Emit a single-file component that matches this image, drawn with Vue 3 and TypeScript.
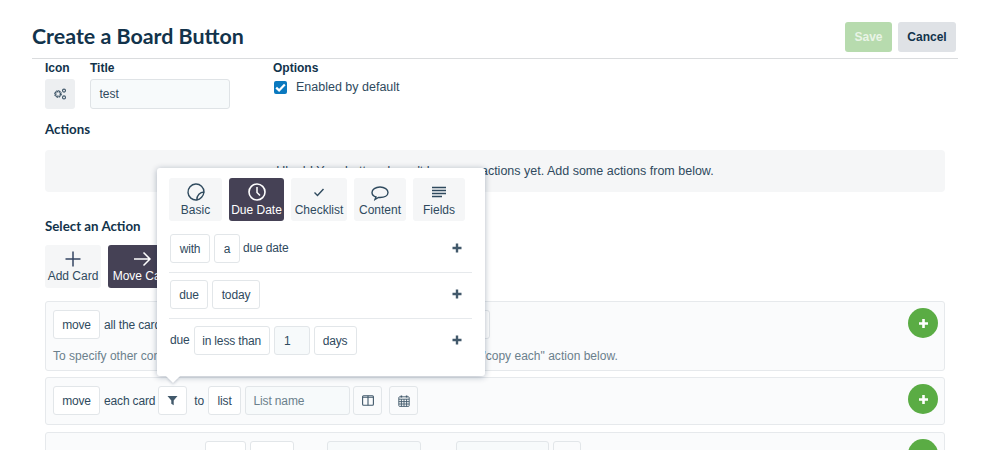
<template>
  <div class="page">
    <header class="page-head">
      <h1>Create a Board Button</h1>
      <div class="head-btns">
        <button class="btn btn--save">Save</button>
        <button class="btn btn--cancel">Cancel</button>
      </div>
    </header>

    <div class="content">
      <div class="settings">
        <div class="field field--icon">
          <label>Icon</label>
          <button class="icon-pick">
            <svg width="14" height="14" viewBox="0 0 14 14" fill="none" stroke="#42596b">
              <circle cx="5" cy="7" r="2.6" stroke-width="1.8" stroke-dasharray="1.5 0.6" />
              <circle cx="5" cy="7" r="3.4" stroke-width="1" stroke-dasharray="1.4 1.2" />
              <circle cx="11" cy="3.6" r="1.5" stroke-width="1.1" />
              <circle cx="11" cy="10.4" r="1.5" stroke-width="1.1" />
            </svg>
          </button>
        </div>
        <div class="field field--title">
          <label>Title</label>
          <div class="title-input">test</div>
        </div>
        <div class="field">
          <label>Options</label>
          <div class="option">
            <span class="checkbox">
              <svg width="11" height="9" viewBox="0 0 11 9" fill="none" stroke="#fff" stroke-width="2.2">
                <path d="M1.2 4.6 4.1 7.4 9.8 1.4" />
              </svg>
            </span>
            Enabled by default
          </div>
        </div>
      </div>

      <h2 class="actions-title">Actions</h2>
      <div class="empty-box">Uh oh! Your button doesn't have any actions yet. Add some actions from below.</div>

      <h2 class="select-title">Select an Action</h2>
      <div class="type-tabs">
        <div class="tab tab--add">
          <svg width="22" height="18" viewBox="0 0 22 18" fill="none" stroke="#344563" stroke-width="1.5">
            <path d="M11 1.5v15M3.5 9h15" />
          </svg>
          <span>Add Card</span>
        </div>
        <div class="tab tab--move tab--active">
          <svg width="22" height="18" viewBox="0 0 22 18" fill="none" stroke="#fff" stroke-width="1.5">
            <path d="M3 9h16M12.5 2.5 19 9l-6.500 6.500" />
          </svg>
          <span>Move Card</span>
        </div>
      </div>

      <div class="rule rule--tall">
        <div class="rule-main">
          <div class="rule-line">
            <span class="chip chip--move">move</span>
            <span>all the cards in the list</span>
            <span class="chip chip--hidden"></span>
          </div>
          <p class="hint">To specify other conditions for cards in this action, you can use the "move each"/"copy each" action below.</p>
        </div>
        <button class="add-btn">
          <svg width="11" height="11" viewBox="0 0 11 11" stroke="#fff" stroke-width="2.600"><path d="M5.500 1v9M1 5.500h9" /></svg>
        </button>
      </div>

      <div class="rule">
        <div class="rule-line">
          <span class="chip chip--move">move</span>
          <span>each card</span>
          <span class="chip chip--icon chip--filter">
            <svg width="11" height="11" viewBox="0 0 11 11" fill="#42596b"><path d="M.5 1h10L6.700 5.600V10.200L4.300 8.800V5.600z" /></svg>
          </span>
          <span class="to-word">to</span>
          <span class="chip chip--list">list</span>
          <span class="chip chip--input">List name</span>
          <span class="chip chip--icon chip--cols">
            <svg width="12" height="11" viewBox="0 0 12 11" fill="none" stroke="#42596b" stroke-width="1.1">
              <rect x=".6" y=".8" width="10.800" height="9.400" rx="1" />
              <path d="M6 .8v9.400M.6 2.200h10.800" />
            </svg>
          </span>
          <span class="chip chip--icon chip--cal">
            <svg width="12" height="12" viewBox="0 0 12 12" fill="none" stroke="#42596b" stroke-width=".9">
              <rect x=".8" y="1.800" width="10.400" height="9.600" rx=".8" />
              <path d="M.8 4.200h10.400M.8 6.600h10.400M.8 9h10.400M3.400 4.200v7.200M6 4.200v7.200M8.600 4.200v7.200" />
              <path d="M3.400.4v2.200M8.600.4v2.200" stroke-width="1.500" />
            </svg>
          </span>
        </div>
        <button class="add-btn">
          <svg width="11" height="11" viewBox="0 0 11 11" stroke="#fff" stroke-width="2.600"><path d="M5.500 1v9M1 5.500h9" /></svg>
        </button>
      </div>

      <div class="rule">
        <div class="rule-line rule-line--third">
          <span class="chip chip--w41"></span>
          <span class="chip chip--w44"></span>
          <span class="chip chip--w94 chip--blank"></span>
          <span class="chip chip--w93 chip--blank"></span>
          <span class="chip chip--w28 chip--icon"></span>
        </div>
        <button class="add-btn">
          <svg width="11" height="11" viewBox="0 0 11 11" stroke="#fff" stroke-width="2.600"><path d="M5.500 1v9M1 5.500h9" /></svg>
        </button>
      </div>
    </div>

    <!-- filter popover -->
    <div class="popover">
      <div class="pop-tabs">
        <div
          v-for="t in popTabs"
          :key="t.label"
          class="tab"
          :class="{ 'tab--active': t.label === 'Due Date' }"
          :style="{ width: `${t.width}px` }"
        >
          <svg width="20" height="20" viewBox="0 0 20 20" fill="none" stroke="currentColor" stroke-width="1.400" v-html="t.icon"></svg>
          <span>{{ t.label }}</span>
        </div>
      </div>

      <div v-for="(row, i) in dueRows" :key="i" class="pop-row">
        <template v-for="part in row" :key="part.text">
          <span v-if="part.kind === 'text'" class="pop-text">{{ part.text }}</span>
          <span
            v-else
            class="chip"
            :class="{ 'chip--num': part.kind === 'num' }"
            :style="{ width: `${part.width}px` }"
          >{{ part.text }}</span>
        </template>
        <svg class="pop-plus" width="10" height="10" viewBox="0 0 10 10" stroke="#42596b" stroke-width="2.400">
          <path d="M5 .5v9M.5 5h9" />
        </svg>
      </div>
      <span class="pop-arrow"></span>
    </div>
  </div>
</template>

<script setup lang="ts">
  type Part = { kind: "text" | "chip" | "num"; text: string; width?: number }

  const popTabs = [
    {
      label: "Basic",
      width: 53,
      icon: '<path d="M10.800 18A8 8 0 1 1 18 10C14 10 10.800 13.500 10.800 18ZM10.800 18C14.500 17.500 17.500 14 18 10" />',
    },
    {
      label: "Due Date",
      width: 55,
      icon: '<circle cx="10" cy="10" r="8" stroke-width="1.600"/><path d="M10 5v5.500l3 3" stroke-width="1.500"/>',
    },
    {
      label: "Checklist",
      width: 56,
      icon: '<path d="M5.500 10.500 8.500 13.500 14.500 7" />',
    },
    {
      label: "Content",
      width: 52,
      icon: '<path d="M6 15c-2.500-.8-4-2.500-4-4.500C2 7.500 5.500 5 10 5s8 2.500 8 5.500-3.500 5-8 5H8.500L5 17.500z" />',
    },
    {
      label: "Fields",
      width: 52,
      icon: '<path d="M3 5.500h14M3 8.500h14M3 11.500h14M3 14.500h10" stroke-width="1.300"/>',
    },
  ]

  const dueRows: Part[][] = [
    [
      { kind: "chip", text: "with", width: 40 },
      { kind: "chip", text: "a", width: 26 },
      { kind: "text", text: "due date" },
    ],
    [
      { kind: "chip", text: "due", width: 38 },
      { kind: "chip", text: "today", width: 48 },
    ],
    [
      { kind: "text", text: "due" },
      { kind: "chip", text: "in less than", width: 76 },
      { kind: "num", text: "1", width: 36 },
      { kind: "chip", text: "days", width: 43 },
    ],
  ]
</script>

<style>
  html,
  body {
    margin: 0;
    background: #fff;
  }
</style>

<style scoped>
  .page {
    position: relative;
    width: 999px;
    height: 450px;
    overflow: hidden;
    background: #fff;
    color: #2f4a5e;
    font-family: "Liberation Sans", Arial, sans-serif;
    font-size: 12px;
    letter-spacing: -0.15px;
  }

  .page-head {
    display: flex;
    align-items: flex-start;
    justify-content: space-between;
    height: 59px;
    margin: 0 41px 0 32px;
    padding: 22px 2px 0 0;
    box-sizing: border-box;
    border-bottom: 1px solid #dadcde;
    letter-spacing: 0;
  }

  h1 {
    margin: 1px 0 0;
    font-family: Lato, sans-serif;
    font-size: 21.400px;
    font-weight: 700;
    color: #12334b;
  }

  .head-btns {
    display: flex;
    gap: 6px;
  }

  .btn {
    height: 30px;
    border: 0;
    border-radius: 3px;
    padding: 0;
    font-family: "Liberation Sans", Arial, sans-serif;
    font-size: 12px;
    font-weight: 700;
  }

  .btn--save {
    width: 47px;
    background: #b7dbae;
    color: #e9f4e6;
  }

  .btn--cancel {
    width: 58px;
    background: #dfe2e6;
    color: #12334b;
  }

  .content {
    padding: 2px 54px 0 45px;
  }

  .settings {
    display: flex;
  }

  .field label {
    display: block;
    height: 18px;
    line-height: 14px;
    font-size: 12px;
    font-weight: 700;
    letter-spacing: 0;
    color: #12334b;
  }

  .field--icon {
    width: 45px;
  }

  .field--title {
    width: 183px;
  }

  .icon-pick {
    display: flex;
    align-items: center;
    justify-content: center;
    width: 30px;
    height: 30px;
    padding: 0;
    border: 0;
    border-radius: 3px;
    background: #edeff1;
  }

  .title-input {
    box-sizing: border-box;
    display: flex;
    align-items: center;
    width: 140px;
    height: 30px;
    padding: 0 8.500px;
    border: 1.500px solid #dfe3e6;
    border-radius: 3px;
    background: #f7fafb;
    font-size: 12px;
    letter-spacing: 0;
    color: #2f4a5e;
  }

  .option {
    display: flex;
    align-items: center;
    gap: 9px;
    margin-top: 1px;
    margin-left: 1px;
    font-size: 12.500px;
    letter-spacing: 0;
  }

  .checkbox {
    display: flex;
    align-items: center;
    justify-content: center;
    width: 13px;
    height: 13px;
    border-radius: 2px;
    background: #0a79bf;
  }

  h2 {
    margin: 0;
    font-family: Lato, sans-serif;
    font-size: 13.300px;
    font-weight: 700;
    letter-spacing: 0;
    line-height: 18px;
    color: #12334b;
  }

  .actions-title {
    margin-top: 11px;
  }

  .empty-box {
    height: 42px;
    margin-top: 12px;
    border-radius: 4px;
    background: #f5f6f7;
    line-height: 42px;
    text-align: center;
    font-size: 12.500px;
    letter-spacing: 0;
  }

  .select-title {
    margin-top: 25px;
  }

  .type-tabs {
    display: flex;
    gap: 7px;
    margin-top: 10px;
  }

  .tab {
    box-sizing: border-box;
    display: flex;
    flex-direction: column;
    align-items: center;
    justify-content: center;
    height: 43px;
    gap: 1px;
    border-radius: 3px;
    background: #f5f6f7;
    color: #2f4a5e;
    font-size: 12px;
    letter-spacing: 0;
    white-space: nowrap;
  }

  .tab--add {
    width: 56px;
  }

  .tab--move {
    width: 68px;
  }

  .tab--active {
    background: #454155;
    color: #fff;
  }

  .rule {
    box-sizing: border-box;
    display: flex;
    justify-content: space-between;
    height: 48px;
    margin-bottom: 7px;
    padding: 8px 6px 0 7px;
    border: 1px solid #e6e9ec;
    border-radius: 3px;
    background: #fafbfc;
  }

  .rule--tall {
    height: 70px;
    margin-top: 13px;
    margin-bottom: 6px;
  }

  .rule-line {
    display: flex;
    align-items: center;
    gap: 4px;
    height: 29px;
  }

  .rule-line--third {
    padding-left: 152px;
  }

  .hint {
    margin: 10px 0 0;
    color: #6b808c;
    font-size: 12px;
    letter-spacing: 0.02px;
    white-space: nowrap;
  }

  .chip {
    box-sizing: border-box;
    display: inline-flex;
    align-items: center;
    justify-content: center;
    flex: none;
    height: 29px;
    border: 1.500px solid #e2e6e9;
    border-radius: 3px;
    background: #fff;
    color: #2f4a5e;
  }

  .chip--move {
    width: 47px;
  }

  .chip--hidden {
    width: 40px;
    margin-left: 230px;
    border-width: 1px;
  }

  .chip--list {
    width: 33px;
  }

  .chip--icon {
    width: 29px;
    border-width: 1px;
    background: #fafbfc;
  }

  .chip--filter {
    background: #fff;
    margin-left: -1px;
  }

  .chip--cols {
    margin-left: -1px;
  }

  .chip--cal {
    margin-left: 3px;
  }

  .to-word {
    margin-left: 3px;
  }

  .chip--input {
    justify-content: flex-start;
    width: 105px;
    padding: 0 7.500px;
    background: #f7fafb;
    color: #6b808c;
  }

  .chip--blank {
    background: #f7fafb;
  }

  .chip--w41 {
    width: 41px;
  }

  .chip--w44 {
    width: 44px;
  }

  .chip--w94 {
    width: 94px;
    margin-left: 29px;
  }

  .chip--w93 {
    width: 93px;
    margin-left: 31px;
  }

  .chip--w28 {
    width: 28px;
  }

  .chip--num {
    justify-content: flex-start;
    padding-left: 9.500px;
    background: #f7fafb;
  }

  .add-btn {
    display: flex;
    align-items: center;
    justify-content: center;
    flex: none;
    width: 30px;
    height: 30px;
    margin-top: -2px;
    padding: 0;
    border: 0;
    border-radius: 50%;
    background: #5aac44;
  }

  .popover {
    position: absolute;
    left: 157px;
    top: 168px;
    box-sizing: border-box;
    width: 328px;
    height: 208px;
    padding: 10px 13px 0 12px;
    border-radius: 3px;
    background: #fff;
    box-shadow: 0 1px 6px rgba(9, 30, 66, 0.32);
  }

  .pop-tabs {
    display: flex;
    gap: 7px;
    margin-bottom: 13px;
  }

  .pop-row {
    position: relative;
    display: flex;
    align-items: flex-start;
    gap: 4px;
    box-sizing: border-box;
    height: 39px;
    margin-bottom: 7px;
    padding: 0 0 9px 1px;
    border-bottom: 1px solid #e6e9ec;
  }

  .pop-row:last-of-type {
    border-bottom: 0;
  }

  .pop-text {
    line-height: 29px;
  }

  .chip + .pop-text {
    margin-left: -1px;
  }

  .pop-plus {
    position: absolute;
    right: 10px;
    top: 9px;
  }

  .pop-arrow {
    position: absolute;
    left: 11px;
    bottom: -5px;
    width: 10px;
    height: 10px;
    background: #fff;
    transform: rotate(45deg);
    box-shadow: 2px 2px 3px -1px rgba(9, 30, 66, 0.2);
  }
</style>
